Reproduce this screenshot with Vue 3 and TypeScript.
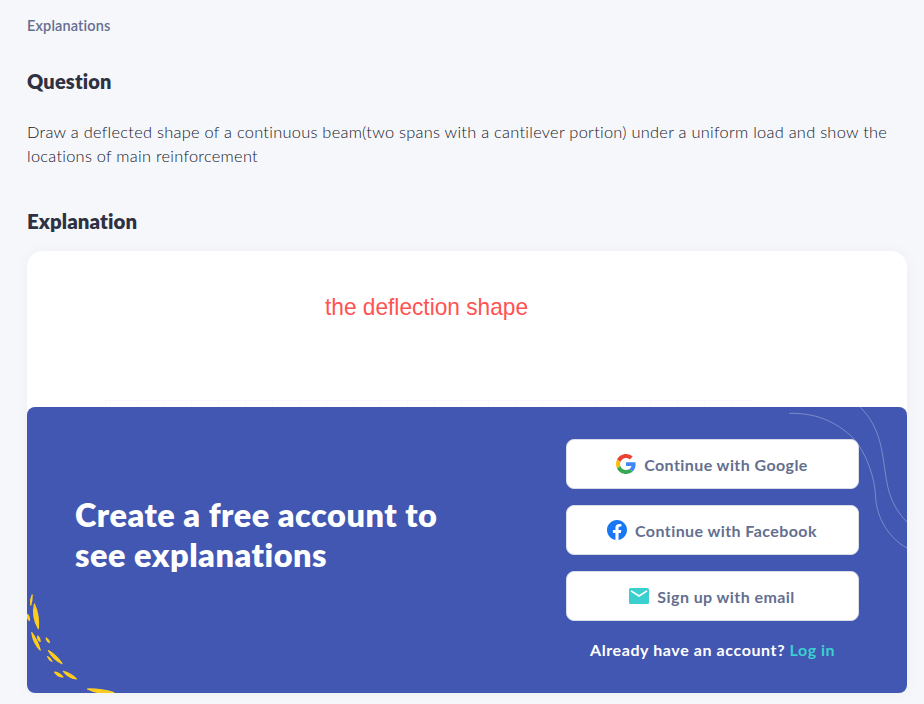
<script setup lang="ts">
interface Stroke { a: [number, number]; b: [number, number]; w: number; bow: number }

const strokes: Stroke[] = [
  { a: [5.2, 187.8], b: [3.8, 198.2], w: 1.2, bow: 0.4 },
  { a: [7.4, 197], b: [11.4, 221.6], w: 4, bow: 0.8 },
  { a: [0.6, 207.5], b: [2.2, 213.5], w: 1.8, bow: 0 },
  { a: [4.8, 225.6], b: [13.2, 243.2], w: 2.6, bow: 0.6 },
  { a: [10.8, 229], b: [13.2, 234.4], w: 1.8, bow: 0.3 },
  { a: [19.2, 231], b: [22.4, 235.6], w: 1.4, bow: 0.2 },
  { a: [21.4, 243.6], b: [35, 256.6], w: 2.8, bow: 0.6 },
  { a: [20.6, 249.6], b: [25, 254.4], w: 1.2, bow: 0.2 },
  { a: [27.5, 265], b: [36, 270], w: 2.4, bow: 0.3 },
  { a: [36.4, 264.4], b: [49.4, 272], w: 2.6, bow: 0.5 },
  { a: [60.4, 282], b: [86.8, 285.6], w: 3.2, bow: 1 },
]

function lens(s: Stroke): string {
  const dx = s.b[0] - s.a[0]
  const dy = s.b[1] - s.a[1]
  const len = Math.hypot(dx, dy)
  const nx = -dy / len
  const ny = dx / len
  const mx = (s.a[0] + s.b[0]) / 2
  const my = (s.a[1] + s.b[1]) / 2
  const p = s.w + s.bow
  const q = s.bow - s.w
  return `M${s.a[0]} ${s.a[1]} Q${mx + nx * p} ${my + ny * p} ${s.b[0]} ${s.b[1]} Q${mx + nx * q} ${my + ny * q} ${s.a[0]} ${s.a[1]}Z`
}
</script>

<template>
  <main class="page">
    <div class="crumb">Explanations</div>
    <h3 class="title">Question</h3>
    <p class="question">Draw a deflected shape of a continuous beam(two spans with a cantilever portion) under a uniform load and show the locations of main reinforcement</p>
    <h3 class="title second">Explanation</h3>

    <section class="card">
      <div class="preview">
        <span class="caption">the deflection shape</span>
        <div class="grid"></div>
      </div>

      <div class="panel">
        <svg class="art" viewBox="0 0 880 286" aria-hidden="true">
          <g fill="none" stroke="#fff" stroke-opacity=".3" stroke-width="1">
            <path d="M762 6.4C787 5.5 809 14 826 31C839 45 848 71 848.5 89C849.5 112 863 132 880 141" />
            <path d="M833 0C861 27 854 64 863.5 89C867 99 872 107 880 115" />
          </g>
          <g fill="#ffcd1f" stroke="#ffcd1f" stroke-width="1.2" stroke-linejoin="round">
            <path v-for="(s, i) in strokes" :key="i" :d="lens(s)" />
          </g>
        </svg>

        <h2 class="headline">Create a free account to<br />see explanations</h2>

        <div class="actions">
          <button class="btn" type="button">
            <svg width="20" height="20" viewBox="0 0 48 48">
              <path fill="#EA4335" d="M24 9.5c3.54 0 6.71 1.22 9.21 3.6l6.85-6.85C35.9 2.38 30.47 0 24 0 14.62 0 6.51 5.38 2.56 13.22l7.98 6.19C12.43 13.72 17.74 9.5 24 9.5z" />
              <path fill="#4285F4" d="M46.98 24.55c0-1.57-.15-3.09-.38-4.55H24v9.02h12.94c-.58 2.96-2.26 5.48-4.78 7.18l7.73 6c4.51-4.18 7.09-10.36 7.09-17.65z" />
              <path fill="#FBBC05" d="M10.53 28.59c-.48-1.45-.76-2.99-.76-4.59s.27-3.14.76-4.59l-7.98-6.19C.92 16.46 0 20.12 0 24c0 3.88.92 7.54 2.56 10.78l7.97-6.19z" />
              <path fill="#34A853" d="M24 48c6.48 0 11.93-2.13 15.89-5.81l-7.73-6c-2.15 1.45-4.92 2.3-8.16 2.3-6.26 0-11.57-4.22-13.47-9.91l-7.98 6.19C6.51 42.62 14.62 48 24 48z" />
            </svg>
            <span>Continue with Google</span>
          </button>
          <button class="btn" type="button">
            <svg width="20" height="20" viewBox="0 0 24 24">
              <path fill="#1877F2" d="M24 12.073c0-6.627-5.373-12-12-12s-12 5.373-12 12c0 5.99 4.388 10.954 10.125 11.854v-8.385H7.078v-3.47h3.047V9.43c0-3.007 1.792-4.669 4.533-4.669 1.312 0 2.686.235 2.686.235v2.953H15.83c-1.491 0-1.956.925-1.956 1.874v2.25h3.328l-.532 3.47h-2.796v8.385C19.612 23.027 24 18.062 24 12.073z" />
            </svg>
            <span>Continue with Facebook</span>
          </button>
          <button class="btn" type="button">
            <svg width="20" height="20" viewBox="0 0 20 20">
              <rect y="2" width="20" height="16" rx="1.6" fill="#3ccfcf" />
              <path d="M2 4.9L10 10L18 4.9" fill="none" stroke="#fff" stroke-width="1.7" />
            </svg>
            <span>Sign up with email</span>
          </button>
          <p class="login">Already have an account? <a>Log in</a></p>
        </div>
      </div>
    </section>
  </main>
</template>

<style>
body {
  background: #f6f7fb;
}
</style>

<style scoped>
.page {
  box-sizing: border-box;
  min-height: 704px;
  padding: 16px 17px 11px 27px;
  font-family: Lato, "Open Sans", sans-serif;
  color: #303545;
}

.crumb {
  font-size: 14.5px;
  line-height: 20px;
  font-weight: 600;
  letter-spacing: 0.15px;
  color: #646f90;
}

.title {
  margin: 31px 0 0;
  font-size: 20px;
  line-height: 28px;
  font-weight: 800;
  letter-spacing: 0.15px;
  color: #2e3142;
}

.question {
  margin: 25px 0 0;
  font-size: 16.4px;
  line-height: 24px;
  font-weight: 300;
  letter-spacing: 0.265px;
  color: #14161f;
}

.second {
  margin-top: 39px;
  font-size: 20.4px;
  letter-spacing: 0.1px;
}

.card {
  margin-top: 16px;
  border-radius: 16px 16px 8px 8px;
  background: #fff;
  box-shadow: 0 0 16px rgba(40, 46, 62, 0.035);
}

.preview {
  display: flex;
  flex-direction: column;
  justify-content: space-between;
  height: 156px;
  padding: 42px 154px 0 78px;
  box-sizing: border-box;
}

.caption {
  margin-left: 219.8px;
  font-family: "Liberation Sans", Arial, sans-serif;
  font-size: 24px;
  line-height: 28px;
  transform: scaleX(0.945);
  transform-origin: left center;
  white-space: nowrap;
  color: #ff5252;
}

.grid {
  height: 7px;
  box-sizing: border-box;
  border-top: 1px solid #f6f6fd;
  border-left: 1px solid #f8f8fe;
  background: repeating-linear-gradient(90deg, #f9f9fe 0 1px, transparent 1px 27px) 4px 0 no-repeat;
}

.panel {
  position: relative;
  display: flex;
  justify-content: space-between;
  height: 286px;
  box-sizing: border-box;
  padding: 32px 48px 0;
  border-radius: 8px;
  overflow: hidden;
  background: #4257b2;
}

.art {
  position: absolute;
  inset: 0;
  width: 880px;
  height: 286px;
}

.headline {
  position: relative;
  margin: 56px 0 0;
  font-size: 32.5px;
  line-height: 40px;
  font-weight: 800;
  letter-spacing: 0.5px;
  color: #fff;
}

.actions {
  position: relative;
  display: flex;
  flex-direction: column;
  gap: 16px;
  width: 293px;
}

.btn {
  display: flex;
  align-items: center;
  justify-content: center;
  gap: 8px;
  height: 50px;
  padding: 0 1px 0 0;
  border: 1px solid #d9dde8;
  border-radius: 8px;
  background: #fff;
  font-family: inherit;
  font-size: 16px;
  line-height: 24px;
  font-weight: 700;
  letter-spacing: 0.42px;
  color: #646f90;
}

.btn span {
  padding-top: 2px;
}

.login {
  margin: 1px 0 0;
  font-size: 16px;
  line-height: 24px;
  font-weight: 700;
  letter-spacing: 0.6px;
  text-align: center;
  color: #fff;
}

.login a {
  color: #3ccfcf;
  letter-spacing: 0.5px;
}
</style>
